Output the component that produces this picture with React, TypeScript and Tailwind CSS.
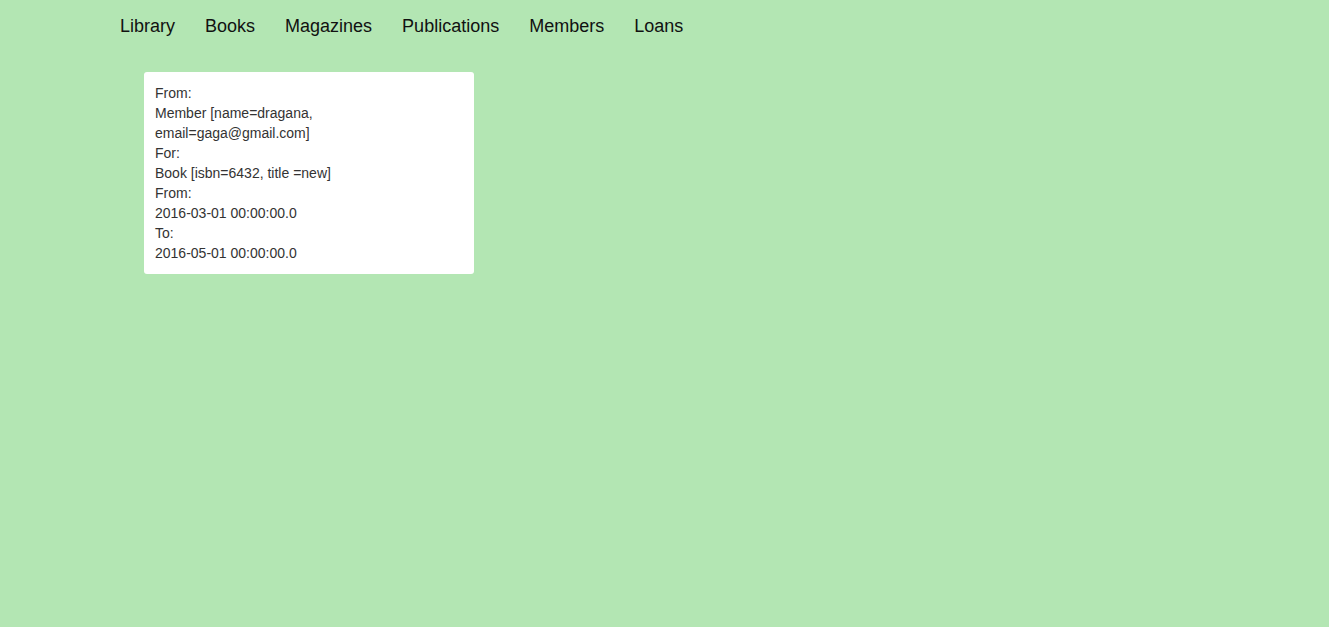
const navItems = ['Library', 'Books', 'Magazines', 'Publications', 'Members', 'Loans'];

export default function App() {
  return (
    <div className="min-h-[627px] bg-[#b3e6b3] font-['Liberation_Sans',Arial,sans-serif]">
      {/* navigation */}
      <nav className="flex h-[52px] items-center pl-[105px]">
        {navItems.map((item) => (
          <a key={item} href="#" className="px-[15px] text-[18px] leading-[20px] text-[#111]">
            {item}
          </a>
        ))}
      </nav>

      {/* loan card */}
      <div className="ml-[144px] mt-[20px] w-[330px] rounded-[3px] bg-white px-[11px] py-[11px] text-[14px] leading-[20px] text-[#333]">
        <div>From:</div>
        <div>Member [name=dragana,</div>
        <div>email=gaga@gmail.com]</div>
        <div>For:</div>
        <div>Book [isbn=6432, title =new]</div>
        <div>From:</div>
        <div>2016-03-01 00:00:00.0</div>
        <div>To:</div>
        <div>2016-05-01 00:00:00.0</div>
      </div>
    </div>
  );
}
